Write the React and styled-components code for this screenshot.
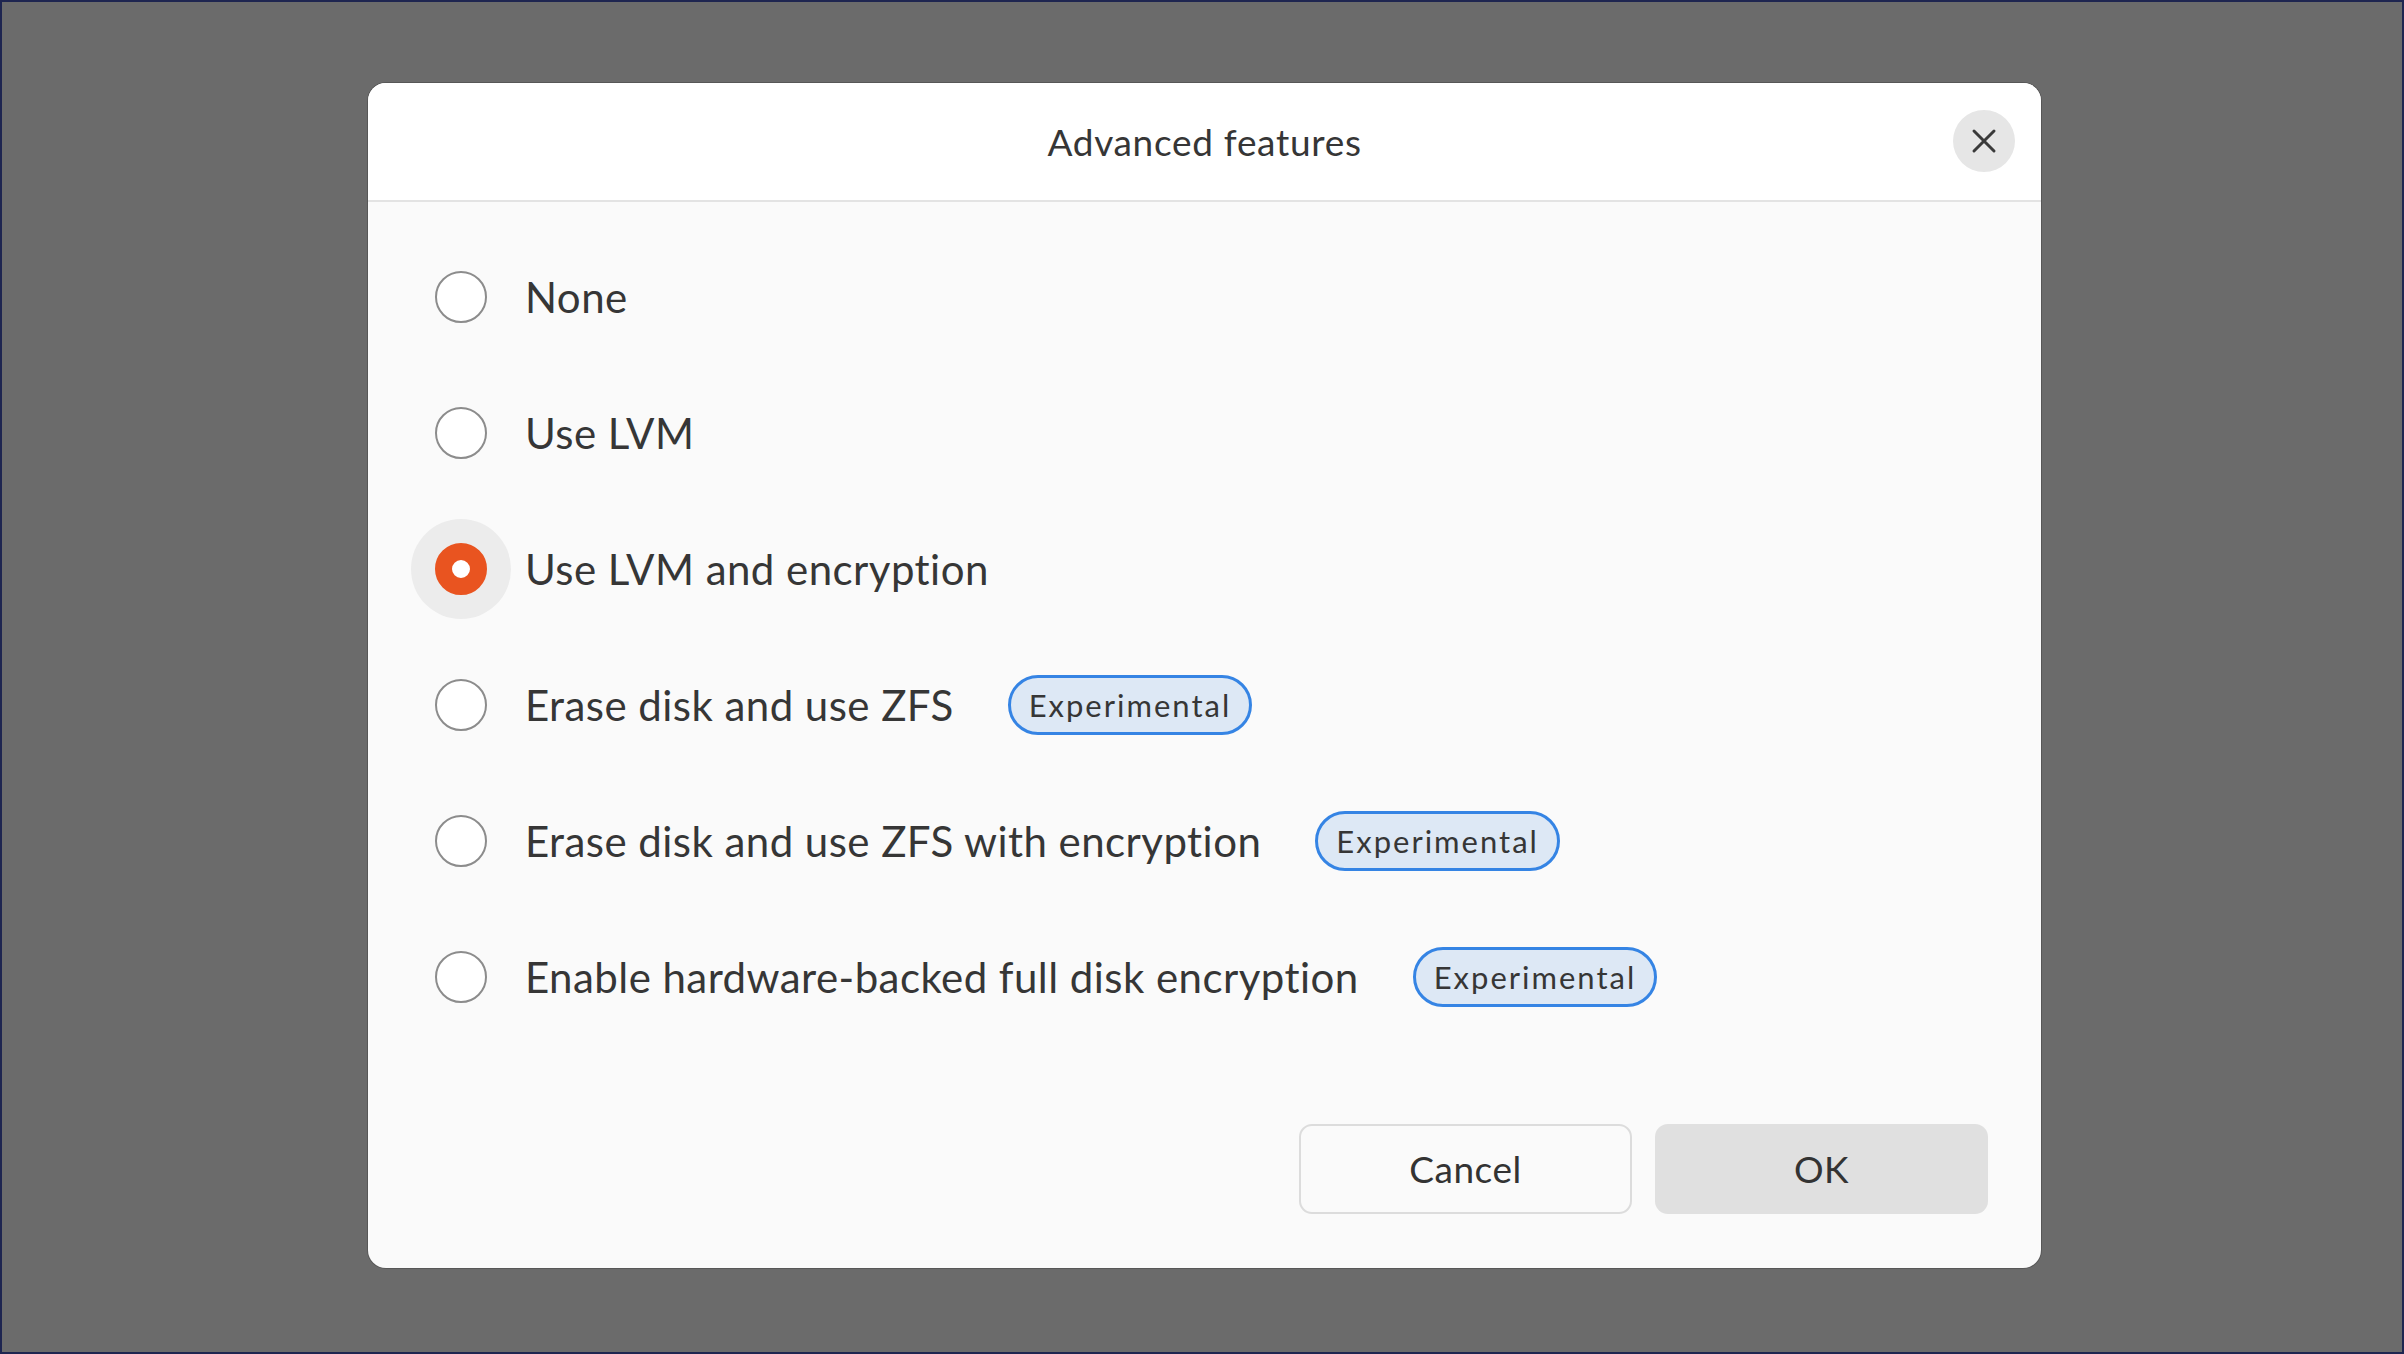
import React, { useState } from 'react'
import styled, { createGlobalStyle } from 'styled-components'

const Global = createGlobalStyle`
  html, body { margin: 0; padding: 0; }
  body { font-family: Lato, "Noto Sans", sans-serif; }
`

const options = [
  { id: 'none', label: 'None' },
  { id: 'lvm', label: 'Use LVM' },
  { id: 'lvm-enc', label: 'Use LVM and encryption' },
  { id: 'zfs', label: 'Erase disk and use ZFS', badge: 'Experimental' },
  { id: 'zfs-enc', label: 'Erase disk and use ZFS with encryption', badge: 'Experimental' },
  { id: 'tpm', label: 'Enable hardware-backed full disk encryption', badge: 'Experimental' },
]

const App = () => {
  const [choice, setChoice] = useState('lvm-enc')

  return (
    <Screen>
      <Global />
      <Dialog>
        <Header>
          <Title>Advanced features</Title>
          <CloseButton aria-label="Close">
            <svg width="26" height="26" viewBox="0 0 26 26">
              <path d="M3 3 L23 23 M23 3 L3 23" stroke="#3a3a3a" strokeWidth="3" strokeLinecap="round" />
            </svg>
          </CloseButton>
        </Header>
        <Body>
          <OptionList>
            {options.map(o => (
              <Option key={o.id} onClick={() => setChoice(o.id)}>
                <Radio $checked={choice === o.id} />
                <Label>{o.label}</Label>
                {o.badge && <Badge>{o.badge}</Badge>}
              </Option>
            ))}
          </OptionList>
          <Footer>
            <Button>Cancel</Button>
            <Button $primary>OK</Button>
          </Footer>
        </Body>
      </Dialog>
    </Screen>
  )
}

export default App

const Screen = styled.div`
  box-sizing: border-box;
  width: 2404px;
  height: 1354px;
  border: 2px solid #1e2550;
  background: #6b6b6b;
  display: flex;
  align-items: center;
  justify-content: center;
`

const Dialog = styled.div`
  width: 1673px;
  height: 1185px;
  margin-left: 5px;
  margin-top: -4px;
  border-radius: 18px;
  overflow: hidden;
  background: #fafafa;
  box-shadow: 0 0 0 1px rgba(0,0,0,0.18);
  display: flex;
  flex-direction: column;
`

const Header = styled.div`
  position: relative;
  height: 117px;
  flex: none;
  background: #fff;
  border-bottom: 2px solid #e3e3e3;
  display: flex;
  align-items: center;
  justify-content: center;
`

const Title = styled.h1`
  margin: 0;
  font-size: 37px;
  font-weight: 400;
  letter-spacing: 0.7px;
  color: #363636;
`

const CloseButton = styled.button`
  position: absolute;
  right: 26px;
  top: 27px;
  width: 62px;
  height: 62px;
  border: none;
  border-radius: 50%;
  background: #e6e6e6;
  display: flex;
  align-items: center;
  justify-content: center;
  padding: 0;
`

const Body = styled.div`
  flex: 1;
  display: flex;
  flex-direction: column;
  padding: 27px 53px 54px 67px;
`

const OptionList = styled.div`
  display: flex;
  flex-direction: column;
`

const Option = styled.div`
  height: 136px;
  display: flex;
  align-items: center;
  cursor: pointer;
`

const Radio = styled.span`
  box-sizing: border-box;
  flex: none;
  width: 52px;
  height: 52px;
  border-radius: 50%;
  background: #fff;
  border: ${p => (p.$checked ? '17px solid #e95420' : '2px solid #8c8c8c')};
  box-shadow: ${p => (p.$checked ? '0 0 0 24px #ececec' : 'none')};
`

const Label = styled.span`
  margin-left: 38px;
  font-size: 42px;
  letter-spacing: 0.45px;
  color: #363636;
`

const Badge = styled.span`
  margin-left: 54px;
  box-sizing: border-box;
  height: 60px;
  padding: 0 18px;
  display: inline-flex;
  align-items: center;
  border: 3px solid #3584e4;
  border-radius: 30px;
  background: #dde8f5;
  font-size: 31px;
  letter-spacing: 2px;
  color: #363636;
`

const Footer = styled.div`
  margin-top: auto;
  display: flex;
  justify-content: flex-end;
  gap: 23px;
`

const Button = styled.button`
  box-sizing: border-box;
  width: 333px;
  height: 90px;
  border-radius: 13px;
  font-family: Lato, "Noto Sans", sans-serif;
  font-size: 37px;
  letter-spacing: 0.5px;
  color: #333;
  background: ${p => (p.$primary ? '#e0e0e0' : '#fafafa')};
  border: ${p => (p.$primary ? 'none' : '2px solid #dcdcdc')};
`
